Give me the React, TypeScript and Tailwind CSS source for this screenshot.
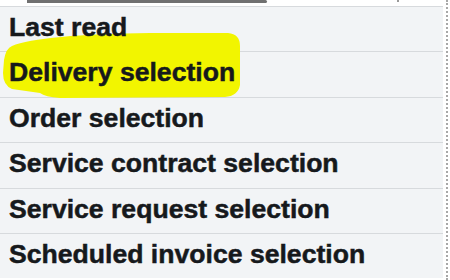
import React from "react";

const items = [
  "Last read",
  "Delivery selection",
  "Order selection",
  "Service contract selection",
  "Service request selection",
  "Scheduled invoice selection",
];

export default function App() {
  return (
    <div className="relative w-[450px] h-[280px] overflow-hidden bg-white font-['Liberation_Sans',Arial,sans-serif]">
      <div className="flex h-full">
        <div className="w-[443px] flex flex-col">
          {/* top strip with scrollbar thumb */}
          <div className="relative h-[6px] bg-white">
            <div className="absolute left-[27px] top-0 w-[240px] h-[3px] rounded-r-full bg-[#707070]" />
            <div className="absolute left-[397px] top-0 w-[2px] h-[2px] bg-[#9a9a9a]" />
          </div>
          {items.map((label) => (
            <div
              key={label}
              className="h-[45.4px] shrink-0 border-t border-[#d7dadd] bg-[#f2f4f6] flex items-start pt-[7px] pl-[9px]"
            >
              <span className="relative z-10 text-[26.6px] leading-none font-bold text-[#16191c] whitespace-nowrap [-webkit-text-stroke:0.5px_#16191c]">
                {label}
              </span>
            </div>
          ))}
        </div>
        <div className="w-[3px] bg-white" />
        <div className="w-[2px] h-full border-l-2 border-dotted border-[#a8a8a8]" />
        <div className="flex-1 bg-white" />
      </div>

      {/* highlighter mark */}
      <svg
        className="absolute left-0 top-0 pointer-events-none"
        width="450"
        height="280"
        viewBox="0 0 450 280"
      >
        <path
          d="M 12 46 C 30 38, 80 34, 150 33 L 228 33 Q 240 34 240 46 L 240 85 Q 238 96 225 97 L 60 98 Q 45 97 40 93 L 12 89 Q 3 85 3 73 L 4 60 Q 6 48 12 46 Z"
          fill="#f2f500"
        />
      </svg>
    </div>
  );
}
